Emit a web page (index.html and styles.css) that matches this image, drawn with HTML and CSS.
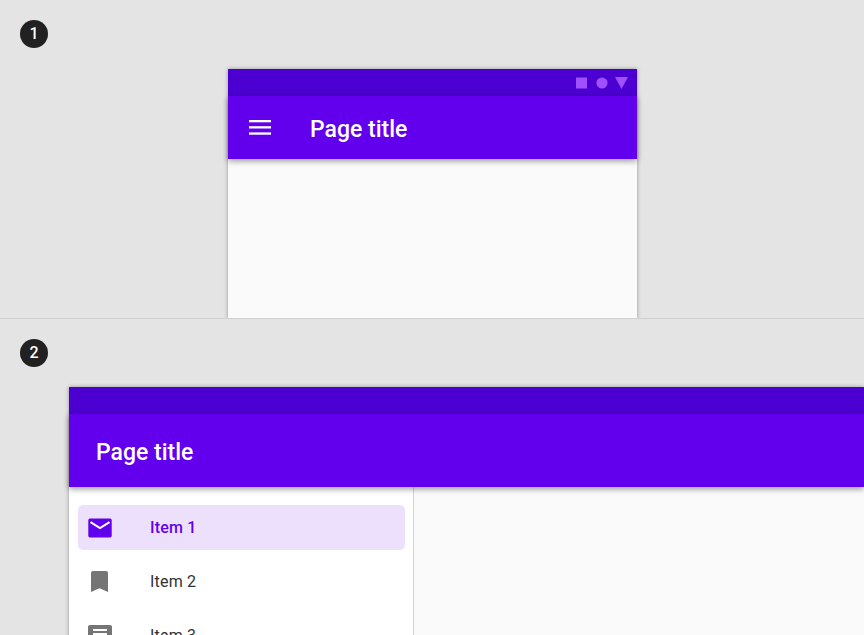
FILE: index.html

```html
<!DOCTYPE html>
<html lang="en">
<head>
  <meta charset="UTF-8">
  <title>Navigation drawer</title>
  <link rel="stylesheet" href="styles.css">
</head>
<body>
  <section class="panel panel-one">
    <div class="badge">1</div>
    <div class="phone">
      <div class="status-bar">
        <svg class="status-icons" width="52" height="12" viewBox="0 0 52 12">
          <rect x="0" y="0.5" width="11" height="11" />
          <circle cx="26" cy="6" r="5.6" />
          <polygon points="39,0 52,0 45.500,12" />
        </svg>
      </div>
      <header class="app-bar">
        <svg class="menu-icon" width="22" height="15" viewBox="0 0 22 15">
          <rect x="0" y="0" width="22" height="2.300" />
          <rect x="0" y="6.200" width="22" height="2.300" />
          <rect x="0" y="12.400" width="22" height="2.300" />
        </svg>
        <span class="page-title">Page title</span>
      </header>
      <div class="sheet"></div>
    </div>
  </section>

  <section class="panel panel-two">
    <div class="badge">2</div>
    <div class="tablet">
      <div class="status-bar"></div>
      <header class="app-bar app-bar-tall">
        <span class="page-title">Page title</span>
      </header>
      <div class="body-row">
        <nav class="drawer">
          <a class="nav-item active">
            <span class="nav-slot">
              <svg class="nav-icon" width="24" height="20" viewBox="0 0 24 20">
                <path d="M2 .5h20A1.700 1.700 0 0 1 23.700 2.200v15.600a1.700 1.700 0 0 1-1.700 1.700H2a1.700 1.700 0 0 1-1.700-1.700V2.200A1.700 1.700 0 0 1 2 .5z" />
                <path class="mail-flap" d="M2.500 4.200 12 10l9.500-5.800" />
              </svg>
            </span>
            <span class="nav-label">Item 1</span>
          </a>
          <a class="nav-item">
            <span class="nav-slot">
              <svg class="nav-icon" width="17" height="21" viewBox="0 0 17 21">
                <path d="M2 0h13a2 2 0 0 1 2 2v19l-8.500-3.700L0 21V2a2 2 0 0 1 2-2z" />
              </svg>
            </span>
            <span class="nav-label">Item 2</span>
          </a>
          <a class="nav-item">
            <span class="nav-slot">
              <svg class="nav-icon" width="24" height="22" viewBox="0 0 24 22">
                <path d="M2 0h20a2 2 0 0 1 2 2v18a2 2 0 0 1-2 2H2a2 2 0 0 1-2-2V2a2 2 0 0 1 2-2z" />
                <rect class="doc-line" x="5" y="4" width="14" height="2" />
                <rect class="doc-line" x="5" y="8" width="14" height="2" />
                <rect class="doc-line" x="5" y="12" width="14" height="2" />
              </svg>
            </span>
            <span class="nav-label">Item 3</span>
          </a>
        </nav>
        <div class="content"></div>
      </div>
    </div>
  </section>
</body>
</html>
```

FILE: styles.css

```css
* {
  box-sizing: border-box;
}

html, body {
  height: 635px;
  overflow: hidden;
}

body {
  margin: 0;
  background: #e4e4e4;
  font-family: Roboto, 'Liberation Sans', sans-serif;
}

.panel {
  overflow: hidden;
  padding-top: 20px;
}

.panel-one {
  height: 319px;
  border-bottom: 1px solid #cfcfcf;
}

.panel-two {
  height: 316px;
}

.badge {
  width: 28px;
  height: 28px;
  margin-left: 20px;
  border-radius: 50%;
  background: #212121;
  color: white;
  font-size: 16px;
  font-weight: 500;
  line-height: 28px;
  text-align: center;
}

.phone {
  width: 409px;
  margin: 21px 0 0 228px;
  box-shadow: 0 0 4px rgba(0,0,0,0.35);
}

.tablet {
  margin: 20px 0 0 69px;
  box-shadow: 0 0 4px rgba(0,0,0,0.35);
}

.status-bar {
  display: flex;
  justify-content: flex-end;
  align-items: center;
  height: 27px;
  padding-right: 9px;
  background: #4b00d1;
}

.status-icons {
  fill: #a050ff;
}

.app-bar {
  position: relative;
  display: flex;
  align-items: center;
  gap: 39px;
  height: 63px;
  padding-left: 21px;
  background: #6200ee;
  box-shadow: 0 2px 6px rgba(0,0,0,0.4);
  color: white;
}

.app-bar-tall {
  height: 73px;
  padding-left: 27px;
}

.menu-icon {
  fill: white;
}

.page-title {
  padding-top: 4px;
  font-size: 23px;
  font-weight: 500;
}

.sheet {
  height: 160px;
  background: #fafafa;
}

.body-row {
  display: flex;
}

.drawer {
  display: flex;
  flex-direction: column;
  gap: 9px;
  width: 345px;
  height: 180px;
  padding: 18px 8px 0 9px;
  background: white;
  border-right: 1px solid #d4d4d4;
}

.content {
  flex: 1;
  background: #fafafa;
}

.nav-item {
  display: flex;
  align-items: center;
  flex-shrink: 0;
  height: 45px;
  border-radius: 5px;
  color: #333333;
  font-size: 16px;
  letter-spacing: 0.2px;
}

.nav-slot {
  display: flex;
  justify-content: center;
  flex-shrink: 0;
  width: 72px;
  padding-right: 29px;
}

.nav-label {
  padding-bottom: 1px;
}

.nav-icon {
  fill: #757575;
}

.nav-item.active {
  background: #ede0fc;
  color: #6200ee;
  font-weight: 500;
}

.nav-item.active .nav-icon {
  fill: #6200ee;
}

.mail-flap {
  fill: none;
  stroke: white;
  stroke-width: 2;
}

.doc-line {
  fill: white;
}
```
